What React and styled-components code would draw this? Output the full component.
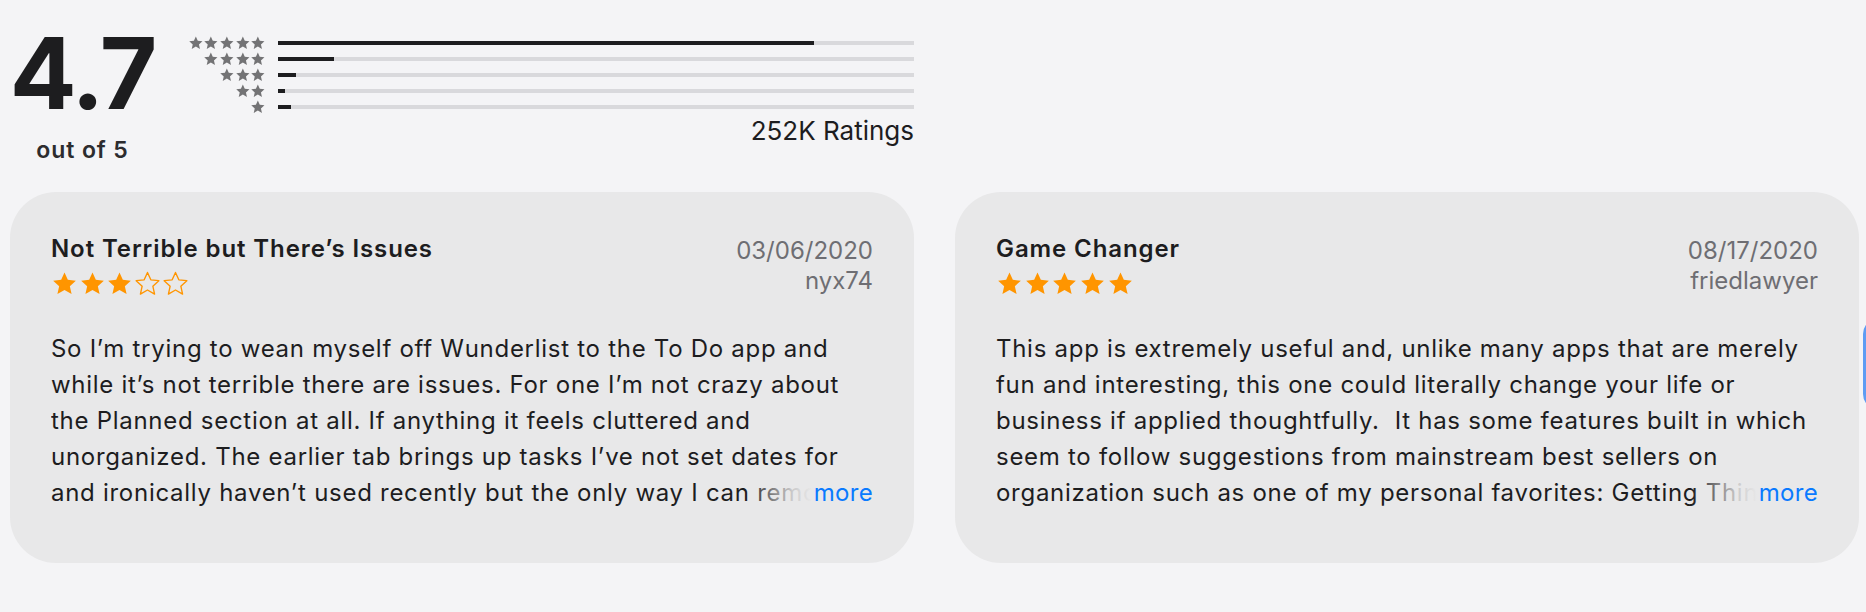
import React from "react";
import styled, { createGlobalStyle } from "styled-components";

const GlobalStyle = createGlobalStyle`
    html, body {
        margin: 0;
        padding: 0;
        overflow: hidden;
        background: #f4f4f6;
        font-family: "Inter", "Liberation Sans", sans-serif;
        color: #1d1d1f;
    }
`

const STAR = "M12 2.2l2.95 6.55 7.15.75-5.35 4.85 1.55 7.05L12 17.75 5.7 21.4l1.55-7.05L1.9 9.5l7.15-.75z";

const Star = ({ size, filled = true, color }) => {
    return (
        <svg width={size} height={size} viewBox="0 0 24 24" fill="none" xmlns="http://www.w3.org/2000/svg">
            <path
                d={STAR}
                fill={filled ? color : "none"}
                stroke={color}
                strokeWidth={filled ? 0 : 1.2}
                strokeLinejoin="round"
            />
        </svg>
    )
}

const histogram = [
    { stars: 5, share: 0.842 },
    { stars: 4, share: 0.088 },
    { stars: 3, share: 0.029 },
    { stars: 2, share: 0.011 },
    { stars: 1, share: 0.02 },
]

const reviews = [
    {
        title: "Not Terrible but There’s Issues",
        rating: 3,
        date: "03/06/2020",
        user: "nyx74",
        lines: [
            "So I’m trying to wean myself off Wunderlist to the To Do app and",
            "while it’s not terrible there are issues. For one I’m not crazy about",
            "the Planned section at all. If anything it feels cluttered and",
            "unorganized. The earlier tab brings up tasks I’ve not set dates for",
            "and ironically haven’t used recently but the only way I can remove them is",
        ],
    },
    {
        title: "Game Changer",
        rating: 5,
        date: "08/17/2020",
        user: "friedlawyer",
        lines: [
            "This app is extremely useful and, unlike many apps that are merely",
            "fun and interesting, this one could literally change your life or",
            "business if applied thoughtfully.  It has some features built in which",
            "seem to follow suggestions from mainstream best sellers on",
            "organization such as one of my personal favorites: Getting Things Done",
        ],
    },
]

const RatingsSummary = () => {
    return (
        <Summary>
            <ScoreBlock>
                <Score>4.7</Score>
                <OutOf>out of 5</OutOf>
            </ScoreBlock>
            <Histogram>
                {histogram.map((row) => (
                    <HistRow key={row.stars}>
                        <HistStars>
                            {Array.from({ length: row.stars }).map((_, i) => (
                                <Star key={i} size={15.7} color="#737375" />
                            ))}
                        </HistStars>
                        <Track>
                            <Fill style={{ width: `${row.share * 100}%` }} />
                        </Track>
                    </HistRow>
                ))}
                <RatingCount>252K Ratings</RatingCount>
            </Histogram>
        </Summary>
    )
}

const ReviewCard = ({ review }) => {
    return (
        <Card>
            <CardHeader>
                <HeaderLeft>
                    <Title>{review.title}</Title>
                    <StarRow>
                        {[1, 2, 3, 4, 5].map((n) => (
                            <Star key={n} size={27} filled={n <= review.rating} color="#ff9500" />
                        ))}
                    </StarRow>
                </HeaderLeft>
                <HeaderRight>
                    <Meta>{review.date}</Meta>
                    <Meta>{review.user}</Meta>
                </HeaderRight>
            </CardHeader>
            <Body>
                {review.lines.map((line, i) => (
                    <Line key={i}>{line}</Line>
                ))}
                <More>more</More>
            </Body>
        </Card>
    )
}

const App = () => {
    return (
        <Page>
            <GlobalStyle />
            <RatingsSummary />
            <CardsRow>
                {reviews.map((r) => (
                    <ReviewCard key={r.user} review={r} />
                ))}
                <NextCard />
            </CardsRow>
        </Page>
    )
}

export default App;

const Page = styled.div`
    width: 1866px;
    height: 612px;
`

const Summary = styled.div`
    display: flex;
    align-items: flex-start;
    gap: 34px;
    padding: 24px 0 0 12px;
`

const ScoreBlock = styled.div`
    display: flex;
    flex-direction: column;
    align-items: center;
    width: 141px;
`

const Score = styled.div`
    font-size: 99px;
    line-height: 99px;
    font-weight: 700;
    letter-spacing: -2px;
    color: #1d1d1f;
`

const OutOf = styled.div`
    margin-top: 14px;
    font-size: 23px;
    line-height: 27px;
    font-weight: 600;
    letter-spacing: 0.9px;
    color: #2c2c2e;
`

const Histogram = styled.div`
    display: flex;
    flex-direction: column;
    width: 727px;
    margin-top: 11px;
`

const HistRow = styled.div`
    display: grid;
    grid-template-columns: 79px 1fr;
    column-gap: 12px;
    align-items: center;
    height: 16px;
`

const HistStars = styled.div`
    display: flex;
    justify-content: flex-end;
    svg {
        display: block;
        flex-shrink: 0;
    }
`

const Track = styled.div`
    height: 4px;
    background: #d9d9dc;
`

const Fill = styled.div`
    height: 100%;
    background: #1d1d1f;
`

const RatingCount = styled.div`
    align-self: flex-end;
    font-size: 26px;
    line-height: 32px;
    font-weight: 400;
    color: #1d1d1f;
`

const CardsRow = styled.div`
    display: flex;
    gap: 41px;
    padding-left: 10px;
    margin-top: 28px;
`

const Card = styled.div`
    flex-shrink: 0;
    box-sizing: border-box;
    width: 904px;
    height: 371px;
    padding: 42px 41px 0;
    border-radius: 46px;
    background: #e8e8e9;
    display: flex;
    flex-direction: column;
`

const NextCard = styled.div`
    flex-shrink: 0;
    width: 60px;
    height: 92px;
    margin-top: 126px;
    margin-left: -37px;
    box-sizing: border-box;
    border: 3px solid #5e9cf3;
    border-radius: 16px;
    background: #e8e8e9;
`

const CardHeader = styled.div`
    display: flex;
    justify-content: space-between;
    align-items: flex-start;
`

const HeaderLeft = styled.div`
    display: flex;
    flex-direction: column;
`

const HeaderRight = styled.div`
    display: flex;
    flex-direction: column;
    align-items: flex-end;
    padding-top: 2px;
`

const Title = styled.div`
    font-size: 24px;
    line-height: 30px;
    font-weight: 600;
    letter-spacing: 0.9px;
    color: #1d1d1f;
`

const StarRow = styled.div`
    display: flex;
    gap: 0.7px;
    margin-top: 6px;
    svg {
        display: block;
    }
`

const Meta = styled.div`
    font-size: 24px;
    line-height: 30px;
    color: #6e6e73;
`

const Body = styled.div`
    position: relative;
    margin-top: 34px;
    height: 180px;
    overflow: hidden;
    font-size: 24px;
    line-height: 36px;
    letter-spacing: 0.72px;
    color: #1d1d1f;
`

const Line = styled.div`
    white-space: pre;
`

const More = styled.span`
    position: absolute;
    right: 0;
    bottom: 0;
    padding-left: 2px;
    letter-spacing: 0.3px;
    background: #e8e8e9;
    color: #0a7aff;
    &::before {
        content: "";
        position: absolute;
        top: 0;
        bottom: 0;
        right: 100%;
        width: 66px;
        background: linear-gradient(to right, rgba(232, 232, 233, 0), rgba(232, 232, 233, 0.85) 70%, #e8e8e9);
    }
`
